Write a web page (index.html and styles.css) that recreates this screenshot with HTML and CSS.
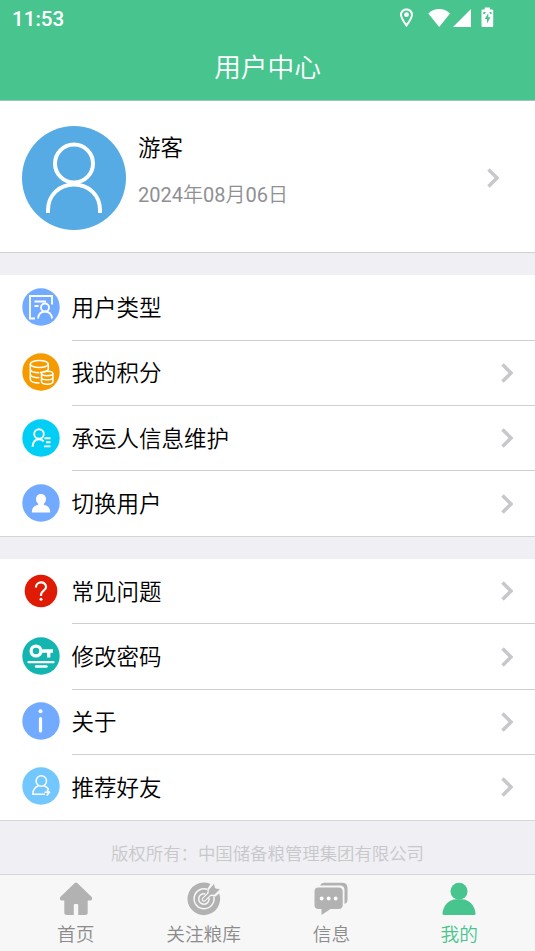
FILE: index.html
```html
<!DOCTYPE html>
<html lang="zh-CN">
<head>
<meta charset="utf-8">
<title>用户中心</title>
<link rel="stylesheet" href="styles.css">
</head>
<body>
<div class="app">
  <header class="header">
    <div class="status">
      <span class="time">11:53</span>
      <svg class="status-icons" viewBox="0 0 100 24" fill="#fff">
        <path fill-rule="evenodd" d="M6.5 4.5C2.800 4.500 0 7.200 0 10.500C0 15 6.500 23 6.500 23S13 15 13 10.500C13 7.200 10.200 4.500 6.500 4.500ZM6.500 6.500C9 6.500 11 8.300 11 10.700C11 13.300 8.300 17.300 6.500 19.600C4.700 17.300 2 13.300 2 10.700C2 8.300 4 6.500 6.500 6.500Z"/>
        <circle cx="6.500" cy="10.700" r="2.400"/>
        <path d="M28.300 9.500C34.500 3.600 43.800 3.600 50 9.500L39.200 23Z"/>
        <path d="M71 5V23H53Z"/>
        <path fill-rule="evenodd" d="M84.700 3.500H90V5.500H92.200Q93.200 5.500 93.200 6.500V22Q93.200 23 92.200 23H82.500Q81.500 23 81.500 22V6.500Q81.500 5.500 82.500 5.500H84.700ZM88.300 9L84.800 15H87V19.500L90.500 13.300H88.300ZM83.300 8V10H84.700L86 8ZM89.300 8L90.300 10H91.500V8Z"/>
      </svg>
    </div>
    <h1 class="title">用户中心</h1>
  </header>

  <section class="profile">
    <svg class="avatar" viewBox="0 0 104 104">
      <circle cx="52" cy="52" r="52" fill="#56abe4"/>
      <g fill="none" stroke="#fff" stroke-width="4">
        <circle cx="52" cy="37.500" r="19"/>
        <path d="M26 87V84C26 69 37.500 58.500 52 58.500S78 69 78 84V87"/>
      </g>
    </svg>
    <div class="profile-text">
      <div class="name">游客</div>
      <div class="date"><b>2024</b>年<b>08</b>月<b>06</b>日</div>
    </div>
    <svg class="chevron" viewBox="0 0 12 20"><path d="M1.500 1.500L10 10L1.500 18.500"/></svg>
  </section>

  <ul class="menu">
    <li class="row">
      <svg class="icon" viewBox="0 0 38 38"><circle cx="19" cy="19" r="18.700" fill="#72aaff"/>
        <g fill="none" stroke="#fff" stroke-width="1.800"><path d="M13 30.500H8V8H30V16.500M12.500 13.500H24M12.500 18H16.500"/><circle cx="23" cy="19.500" r="4"/><path d="M16 30.500C16.500 26.500 19 23.500 23 23.500S29.500 26.500 30.200 30.500"/></g></svg>
      <div class="cell"><span>用户类型</span></div>
    </li>
    <li class="row">
      <svg class="icon" viewBox="0 0 38 38"><circle cx="19" cy="19" r="18.700" fill="#f59b00"/>
        <g fill="none" stroke="#fff" stroke-width="1.500"><ellipse cx="17.300" cy="11" rx="9" ry="3.600"/><path d="M8.300 11V26C8.300 28.500 12 30 17.500 30M26.300 11V16.500M8.300 16C8.300 18.500 12 19.700 17.300 19.700M8.300 21C8.300 23.500 12 24.700 17.300 24.700M18 19.500C22 19.300 26.300 18.500 26.300 16"/><ellipse cx="25.200" cy="20.500" rx="5.700" ry="2.200"/><path d="M19.500 20.500V28.500C19.500 32 30.900 32 30.900 28.500V20.500M19.500 24.500C19.500 27.500 30.900 27.500 30.900 24.500"/></g></svg>
      <div class="cell"><span>我的积分</span><svg class="chevron" viewBox="0 0 12 20"><path d="M1.500 1.500L10 10L1.500 18.500"/></svg></div>
    </li>
    <li class="row">
      <svg class="icon" viewBox="0 0 38 38"><circle cx="19" cy="19" r="18.700" fill="#00cef5"/>
        <g fill="none" stroke="#fff" stroke-width="1.900"><circle cx="17" cy="15" r="4.800"/><path d="M10.500 28C10.800 23.300 13 20.300 17 20.300C18.800 20.300 20.500 21 21.700 22.300M22.500 19.200H28.500M24 23.300H28.500M22 27.400H28.500"/></g></svg>
      <div class="cell"><span>承运人信息维护</span><svg class="chevron" viewBox="0 0 12 20"><path d="M1.500 1.500L10 10L1.500 18.500"/></svg></div>
    </li>
    <li class="row row-last">
      <svg class="icon" viewBox="0 0 38 38"><circle cx="19" cy="19" r="18.700" fill="#72aaff"/>
        <path fill="#fff" d="M19 10C22.200 10 24 12.300 24 15C24 17.300 22.800 19 21.800 19.800V20.700C26 21.500 28.200 24 28.200 28.500H9.800C9.800 24 12 21.500 16.200 20.700V19.800C15.200 19 14 17.300 14 15C14 12.300 15.800 10 19 10Z"/></svg>
      <div class="cell"><span>切换用户</span><svg class="chevron" viewBox="0 0 12 20"><path d="M1.500 1.500L10 10L1.500 18.500"/></svg></div>
    </li>
  </ul>

  <ul class="menu">
    <li class="row">
      <svg class="icon" viewBox="0 0 38 38"><circle cx="19" cy="19" r="16.300" fill="#df1b05"/>
        <path d="M13.900 15.500C13.900 8.800 24.100 8.800 24.100 15C24.100 18.800 19 18.500 19 22.800V24" fill="none" stroke="#fff" stroke-width="2.200"/><circle cx="19" cy="27.200" r="1.500" fill="#fff"/></svg>
      <div class="cell"><span>常见问题</span><svg class="chevron" viewBox="0 0 12 20"><path d="M1.500 1.500L10 10L1.500 18.500"/></svg></div>
    </li>
    <li class="row">
      <svg class="icon" viewBox="0 0 38 38"><circle cx="19" cy="19" r="18.700" fill="#13b5b1"/>
        <g fill="none" stroke="#fff"><circle cx="14" cy="14" r="4.900" stroke-width="3.300"/><path d="M19 14H31M26.700 14V20.500" stroke-width="3.400"/><path d="M6.500 25.200H31.500" stroke-width="2.200" stroke-linecap="round"/><path d="M14 29.500H24.500" stroke-width="2.400" stroke-linecap="round"/></g></svg>
      <div class="cell"><span>修改密码</span><svg class="chevron" viewBox="0 0 12 20"><path d="M1.500 1.500L10 10L1.500 18.500"/></svg></div>
    </li>
    <li class="row">
      <svg class="icon" viewBox="0 0 38 38"><circle cx="19" cy="19" r="18.700" fill="#72aaff"/>
        <circle cx="18.500" cy="9.300" r="2" fill="#fff"/><path d="M18.500 16.500V29" stroke="#fff" stroke-width="3.200" stroke-linecap="round"/></svg>
      <div class="cell"><span>关于</span><svg class="chevron" viewBox="0 0 12 20"><path d="M1.500 1.500L10 10L1.500 18.500"/></svg></div>
    </li>
    <li class="row row-last">
      <svg class="icon" viewBox="0 0 38 38"><circle cx="19" cy="19" r="18.700" fill="#73c7ff"/>
        <g fill="none" stroke="#fff" stroke-width="1.500"><circle cx="19.300" cy="14" r="5.200"/><path d="M16.500 18.700C13 20 10.800 23 10.800 27.300H23M22 18.700C24.500 19.600 26 21 26.800 22.500M22.500 25.300H27M24.700 22.800L27.500 25.300L24.700 28.500"/></g></svg>
      <div class="cell"><span>推荐好友</span><svg class="chevron" viewBox="0 0 12 20"><path d="M1.500 1.500L10 10L1.500 18.500"/></svg></div>
    </li>
  </ul>

  <p class="copyright">版权所有：中国储备粮管理集团有限公司</p>

  <nav class="tabs">
    <a class="tab">
      <svg viewBox="0 0 34 34" fill="#b2b2b2"><path d="M15.500 1.200Q17 0 18.500 1.200L32.700 15Q34 17.500 31.500 18.500H28.700V30.500Q28.700 33 26.200 33H19.200V23Q19.200 22 18.200 22H15.800Q14.800 22 14.800 23V33H7.800Q5.300 33 5.300 30.500V18.500H2.500Q0 17.500 1.300 15Z"/></svg>
      <span>首页</span>
    </a>
    <a class="tab">
      <svg viewBox="0 0 34 34"><path d="M23.500 2A16.300 16.300 0 1 0 32.200 11.500L28.500 14.500L20 13.500L21 6Z" fill="#b2b2b2"/>
        <g fill="none" stroke="#f7f7f7" stroke-width="1.500"><path d="M20.800 7.500A10 10 0 1 0 26.800 14.500"/><path d="M18.300 12A5.200 5.200 0 1 0 22 16"/></g>
        <path d="M17 17.300L22.500 12" stroke="#f7f7f7" stroke-width="4.600" stroke-linecap="round"/>
        <path d="M21.300 12.700V8L27.300 1L28.300 6L33.500 7L27.500 13H22Z" fill="#b2b2b2" stroke="#f7f7f7" stroke-width=".8"/>
        <path d="M17 17.300L24 10.500" stroke="#b2b2b2" stroke-width="2.400" stroke-linecap="round"/></svg>
      <span>关注粮库</span>
    </a>
    <a class="tab">
      <svg viewBox="0 0 34 34"><path d="M6 3.500Q7 .8 10 .8H28Q33.500 .8 33.500 6V17.500Q33.500 21 30.500 22V8Q30.500 3.500 26 3.500Z" fill="#b2b2b2"/>
        <path d="M4.500 5.500H24.500Q28.700 5.500 28.700 9.500V23Q28.700 27 24.500 27H16.500L7.500 33V27H4.500Q.5 27 .5 23V9.500Q.5 5.500 4.500 5.500Z" fill="#b2b2b2"/>
        <g fill="#fff"><circle cx="7.700" cy="16.500" r="1.900"/><circle cx="14.700" cy="16.500" r="1.900"/><circle cx="21.700" cy="16.500" r="1.900"/></g></svg>
      <span>信息</span>
    </a>
    <a class="tab tab-active">
      <svg viewBox="0 0 34 34" fill="#48c58e"><circle cx="17" cy="9.300" r="8.500"/><path d="M.5 31.500C1 23.500 7 17.500 14 17.300H20C27 17.500 33 23.500 33.500 31.500Q33.500 33 32 33H2Q.5 33 .5 31.500Z"/></svg>
      <span>我的</span>
    </a>
  </nav>
</div>
</body>
</html>
```

FILE: styles.css
```css
* {
  box-sizing: border-box;
}

body {
  margin: 0;
  background: #efeff4;
  color: #000;
  font-family: Roboto, "Noto Sans CJK SC", sans-serif;
  font-weight: 350;
}

.app {
  display: flex;
  flex-direction: column;
  height: 951px;
}

.header {
  height: 101px;
  background: #48c58e;
  border-bottom: 1px solid #9fc3b4;
  color: #fff;
}

.status {
  display: flex;
  justify-content: space-between;
  height: 38px;
  padding: 0 35px 0 12px;
}

.time {
  font-size: 20.6px;
  font-weight: 500;
  line-height: 38px;
}

.status-icons {
  width: 100px;
  height: 24px;
  margin-top: 4px;
}

.title {
  margin: 0;
  font-size: 26.7px;
  font-weight: 350;
  line-height: 60px;
  text-align: center;
}

.profile {
  display: flex;
  align-items: center;
  height: 152px;
  padding: 2px 36px 0 22px;
  background: #fff;
  border-bottom: 1px solid #d0d0d4;
}

.avatar {
  width: 104px;
  height: 104px;
}

.profile-text {
  flex: 1;
  margin-left: 12px;
}

.name {
  margin-top: -14px;
  font-size: 22.5px;
  line-height: 32px;
}

.date {
  margin-top: 16px;
  color: #8f8f94;
  font-size: 20px;
  line-height: 30px;
}

.date b {
  font-weight: 400;
}

.chevron {
  width: 12px;
  height: 20px;
  fill: none;
  stroke: #c7c7cc;
  stroke-width: 3.5;
}

.menu {
  margin: 22.2px 0 0;
  padding: 0;
  list-style: none;
  background: #fff;
}

.row {
  display: flex;
  align-items: center;
  height: 65.4px;
  padding-left: 22px;
}

.icon {
  width: 38px;
  height: 38px;
  margin-bottom: 2px;
}

.cell {
  display: flex;
  flex: 1;
  align-items: center;
  justify-content: space-between;
  height: 100%;
  margin-left: 11.5px;
  padding-right: 22px;
  border-bottom: 1px solid #cfcfd2;
  font-size: 22.5px;
}

.cell span {
  padding-bottom: 3px;
}

.row-last {
  border-bottom: 1px solid #d6d6da;
}

.row-last .cell {
  border-bottom: 0;
}

.copyright {
  flex: 1;
  margin: 0;
  padding-top: 19px;
  color: #c8c8ca;
  font-size: 17.4px;
  line-height: 28px;
  text-align: center;
}

.tabs {
  display: grid;
  grid-template-columns: repeat(4, 127.8px);
  justify-content: center;
  height: 77px;
  background: #f7f7f7;
  border-top: 1px solid #d6d6d8;
}

.tab {
  display: flex;
  flex-direction: column;
  align-items: center;
  padding-top: 7px;
  color: #8c8c8c;
  font-size: 18.7px;
  line-height: 28px;
}

.tab svg {
  width: 34px;
  height: 34px;
  margin-bottom: 5px;
}

.tab-active {
  color: #48c58e;
}
```
